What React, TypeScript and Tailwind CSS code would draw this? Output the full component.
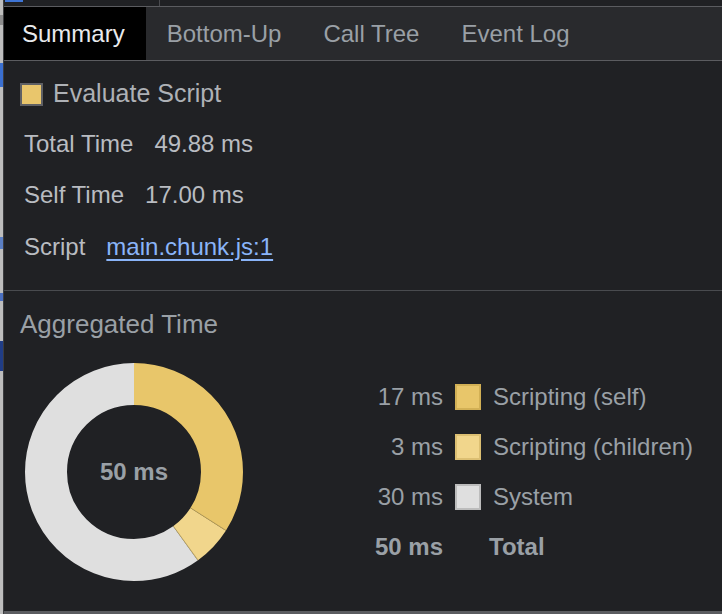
import React from "react";

const font = { fontFamily: '"Liberation Sans", Arial, sans-serif' };

const tabs = ["Summary", "Bottom-Up", "Call Tree", "Event Log"];

const legend = [
  { value: "17 ms", label: "Scripting (self)", fill: "bg-[#e8c66a]", border: "border-[#d2b055]" },
  { value: "3 ms", label: "Scripting (children)", fill: "bg-[#f1d68c]", border: "border-[#dcbf72]" },
  { value: "30 ms", label: "System", fill: "bg-[#dfdfdf]", border: "border-[#bcbcbc]" },
];

function Donut() {
  const r = 88;
  const c = 2 * Math.PI * r;
  const segments = [
    { frac: 0.34, color: "#e8c66a" },
    { frac: 0.06, color: "#f1d68c" },
    { frac: 0.6, color: "#dfdfdf" },
  ];
  let offset = 0;
  // separator angles (clockwise from top)
  const seps = [0.34, 0.4];
  return (
    <div className="relative w-[218px] h-[218px]">
      <svg width="218" height="218" viewBox="0 0 218 218">
        <g transform="rotate(-90 109 109)">
          {segments.map((s, i) => {
            const len = s.frac * c;
            const el = (
              <circle
                key={i}
                cx="109"
                cy="109"
                r={r}
                fill="none"
                stroke={s.color}
                strokeWidth="42"
                strokeDasharray={`${len} ${c - len}`}
                strokeDashoffset={-offset}
              />
            );
            offset += len;
            return el;
          })}
        </g>
        {seps.map((f, i) => {
          const a = f * 2 * Math.PI;
          const x1 = 109 + 67 * Math.sin(a);
          const y1 = 109 - 67 * Math.cos(a);
          const x2 = 109 + 109 * Math.sin(a);
          const y2 = 109 - 109 * Math.cos(a);
          return <line key={i} x1={x1} y1={y1} x2={x2} y2={y2} stroke="#a08a4a" strokeWidth="0.6" />;
        })}
      </svg>
      <div className="absolute inset-0 flex items-center justify-center text-[24px] font-bold text-[#9aa0a6]">
        50 ms
      </div>
    </div>
  );
}

export default function App() {
  return (
    <div className="w-[722px] h-[614px] flex bg-[#202124] overflow-hidden" style={font}>
      {/* page peeking on the left */}
      <div className="w-[3px] h-full bg-[#bdbdbd] flex flex-col">
        <div className="h-[15px]" />
        <div className="h-[10px] bg-[#8d8d8d]" />
        <div className="h-[38px]" />
        <div className="h-[24px] bg-[#3a6fd0]" />
        <div className="h-[150px]" />
        <div className="h-[12px] bg-[#5b7fc4]" />
        <div className="h-[44px]" />
        <div className="h-[8px] bg-[#4a6fc0]" />
        <div className="h-[40px]" />
        <div className="h-[30px] bg-[#203d86]" />
      </div>
      <div className="w-px h-full bg-[#3c3d40]" />

      <div className="flex-1 flex flex-col border-b-[3px] border-[#5b5c60]">
        {/* strip above tabs */}
        <div className="h-[6px] bg-[#202124] flex">
          <div className="w-[1px]" />
          <div className="w-[18px] h-[2px] bg-[#3e75d6]" />
          <div className="w-[136px]" />
          <div className="w-px h-full bg-[#4a4b4f]" />
        </div>
        {/* tabs */}
        <div className="h-[55px] flex bg-[#292a2d] border-y border-[#5b5c60]">
          {tabs.map((t, i) => (
            <div
              key={t}
              className={`h-full flex items-center text-[24px] ${
                i === 0 ? "bg-black text-[#e8eaed] pl-[18px] pr-[21px]" : "px-[21px] text-[#9aa0a6]"
              }`}
            >
              {t}
            </div>
          ))}
        </div>

        {/* details */}
        <div className="pt-[8px] pb-[17px] border-b border-[#494b4f]">
          <div className="h-[50px] flex items-center pl-4 gap-[10px]">
            <div className="w-[23px] h-[23px] bg-[#e9c66c] border-2 border-[#5f6064]" />
            <span className="text-[25px] text-[#aeb1b6]">Evaluate Script</span>
          </div>
          <div className="h-[50px] flex items-center pl-5 gap-[21px] text-[24px] text-[#b9bcc1]">
            <span>Total Time</span>
            <span>49.88 ms</span>
          </div>
          <div className="h-[52px] flex items-center pl-5 gap-[21px] text-[24px] text-[#b9bcc1]">
            <span>Self Time</span>
            <span>17.00 ms</span>
          </div>
          <div className="h-[52px] flex items-center pl-5 gap-[21px] text-[24px] text-[#b9bcc1]">
            <span>Script</span>
            <span className="text-[#8ab4f8] underline underline-offset-[4px]">main.chunk.js:1</span>
          </div>
        </div>

        {/* aggregated */}
        <div className="flex-1 pt-[18px] pl-4">
          <div className="h-[30px] flex items-center text-[26px] text-[#9aa0a6]">Aggregated Time</div>
          <div className="mt-[24px] flex items-center">
            <div className="ml-[5px]">
              <Donut />
            </div>
            <div className="ml-[120px] grid grid-cols-[80px_26px_auto] gap-x-[12px] text-[24px] text-[#9aa0a6]">
              {legend.map((l) => (
                <React.Fragment key={l.label}>
                  <div className="h-[50px] flex items-center justify-end">{l.value}</div>
                  <div className="h-[50px] flex items-center">
                    <div className={`w-[26px] h-[26px] border-2 ${l.fill} ${l.border}`} />
                  </div>
                  <div className="h-[50px] flex items-center">{l.label}</div>
                </React.Fragment>
              ))}
              <div className="h-[50px] flex items-center justify-end font-bold">50 ms</div>
              <div className="h-[50px] col-span-2 flex items-center pl-[34px] font-bold">Total</div>
            </div>
          </div>
        </div>
      </div>
    </div>
  );
}
